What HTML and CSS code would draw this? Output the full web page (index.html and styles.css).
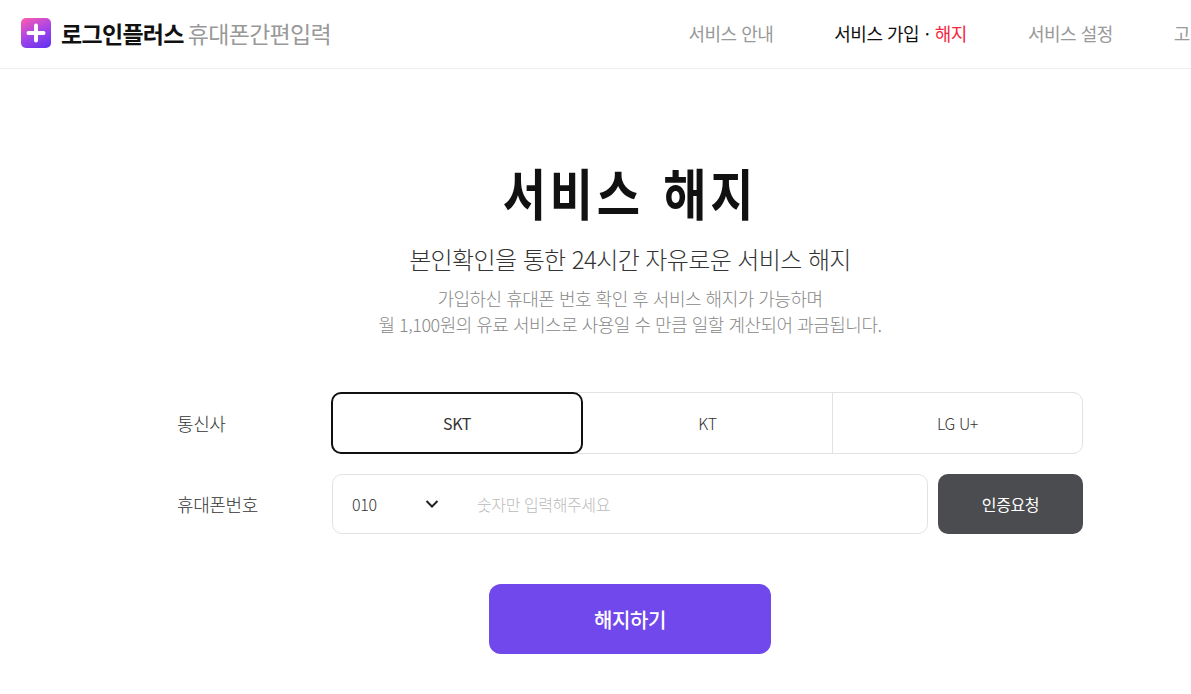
FILE: index.html
```html
<!DOCTYPE html>
<html lang="ko">

<head>
    <meta charset="UTF-8">
    <meta name="viewport" content="width=device-width, initial-scale=1.0">
    <title>서비스 해지</title>
    <link rel="stylesheet" href="styles.css">
</head>

<body>
    <div class="page">
        <header class="topbar">
            <a class="brand" href="#">
                <svg class="brand-icon" width="30" height="30" viewBox="0 0 30 30">
                    <defs>
                        <linearGradient id="brandFill" x1="0.2" y1="0" x2="0.7" y2="1">
                            <stop offset="0" stop-color="#f559b4" />
                            <stop offset="0.5" stop-color="#a945e6" />
                            <stop offset="1" stop-color="#6a35f0" />
                        </linearGradient>
                    </defs>
                    <rect width="30" height="30" rx="5" fill="url(#brandFill)" />
                    <path d="M15 7.5v15M7.5 15h15" stroke="#fff" stroke-width="4" stroke-linecap="round" />
                </svg>
                <span class="brand-name">로그인플러스</span>
                <span class="brand-sub">휴대폰간편입력</span>
            </a>
            <nav class="menu">
                <a href="#">서비스 안내</a>
                <a href="#" class="active">서비스 가입 <i class="dot">·</i> <em>해지</em></a>
                <a href="#">서비스 설정</a>
                <a href="#">고객센터</a>
            </nav>
        </header>

        <main class="content">
            <h1>서비스 해지</h1>
            <p class="lead">본인확인을 통한 24시간 자유로운 서비스 해지</p>
            <p class="note">가입하신 휴대폰 번호 확인 후 서비스 해지가 가능하며<br>월 1,100원의 유료 서비스로 사용일 수 만큼 일할 계산되어 과금됩니다.</p>

            <form class="form">
                <div class="row">
                    <label>통신사</label>
                    <div class="carriers">
                        <button type="button" class="carrier selected">SKT</button>
                        <button type="button" class="carrier">KT</button>
                        <button type="button" class="carrier">LG U+</button>
                    </div>
                </div>
                <div class="row">
                    <label for="phone">휴대폰번호</label>
                    <div class="phone-box">
                        <span class="prefix">010</span>
                        <svg class="chevron" width="14" height="8" viewBox="0 0 14 8">
                            <path d="M1.5 1l5.5 5.5L12.5 1" fill="none" stroke="#222" stroke-width="2" />
                        </svg>
                        <input type="text" id="phone" placeholder="숫자만 입력해주세요">
                    </div>
                    <button type="button" class="request">인증요청</button>
                </div>
                <button type="submit" class="submit">해지하기</button>
            </form>
        </main>
    </div>
</body>

</html>
```

FILE: styles.css
```css
* {
    box-sizing: border-box;
}

html,
body {
    height: 694px;
    overflow: hidden;
}

body {
    margin: 0;
    font-family: "Noto Sans CJK KR", "Noto Sans", sans-serif;
    background-color: #fff;
    color: #333;
}

a {
    text-decoration: none;
    color: inherit;
}

.page {
    width: 1260px;
}

.topbar {
    display: flex;
    align-items: center;
    justify-content: space-between;
    height: 69px;
    padding: 0 22px 2px 21px;
    border-bottom: 1px solid #eee;
    white-space: nowrap;
}

.brand {
    display: flex;
    align-items: center;
}

.brand-icon {
    margin-right: 10px;
}

.brand-name {
    font-size: 23px;
    font-weight: 700;
    color: #111;
    letter-spacing: -0.7px;
}

.brand-sub {
    margin-left: 4px;
    font-size: 23px;
    color: #999;
    letter-spacing: -0.7px;
}

.menu {
    display: flex;
    gap: 61px;
    font-size: 18px;
    color: #999;
    letter-spacing: -0.5px;
}

.menu .active {
    color: #111;
}

.menu .dot {
    font-style: normal;
    margin: 0 1px;
}

.menu em {
    font-style: normal;
    color: #f5273f;
}

.content {
    display: flex;
    flex-direction: column;
    align-items: center;
    padding-top: 85px;
}

h1 {
    margin: 0;
    font-size: 47px;
    line-height: 76px;
    font-weight: 700;
    color: #111;
    letter-spacing: 3.8px;
    word-spacing: 2.5px;
    transform: scaleY(1.17);
}

.lead {
    margin: 11px 0 0;
    font-size: 24px;
    line-height: 36px;
    font-weight: 300;
    color: #333;
    letter-spacing: -0.6px;
}

.note {
    margin: 8px 0 0;
    font-size: 18px;
    line-height: 26px;
    font-weight: 300;
    color: #888;
    text-align: center;
    letter-spacing: -0.5px;
}

.form {
    display: flex;
    flex-direction: column;
    align-items: center;
    width: 906px;
    margin-top: 55px;
}

.row {
    display: flex;
    align-items: center;
    width: 100%;
    margin-bottom: 20px;
}

.row label {
    width: 155px;
    font-size: 18px;
    font-weight: 300;
    letter-spacing: -0.4px;
    color: #333;
}

.carriers {
    display: flex;
    flex: 1;
    height: 62px;
    border: 1px solid #e2e2e2;
    border-radius: 10px;
}

.carrier {
    flex: 1;
    margin: -1px 0;
    padding: 0;
    font-family: inherit;
    font-size: 16px;
    font-weight: 300;
    color: #333;
    letter-spacing: -0.4px;
    background: none;
    border: none;
    border-left: 1px solid #e2e2e2;
}

.carrier.selected {
    flex: 0 0 252px;
    margin-left: -2px;
    font-weight: 400;
    border: 2px solid #111;
    border-radius: 10px;
}

.carrier.selected + .carrier {
    border-left: none;
}

.phone-box {
    display: flex;
    align-items: center;
    flex: 1;
    height: 60px;
    padding-left: 19px;
    border: 1px solid #e2e2e2;
    border-radius: 10px;
}

.prefix {
    width: 73px;
    font-size: 16px;
    font-weight: 300;
    letter-spacing: -0.3px;
}

.chevron {
    margin-right: 38px;
}

.phone-box input {
    flex: 1;
    min-width: 0;
    padding: 0;
    font-family: inherit;
    font-size: 16px;
    font-weight: 300;
    letter-spacing: -0.4px;
    border: none;
    outline: none;
}

.phone-box input::placeholder {
    color: #bbb;
}

.request {
    width: 145px;
    height: 60px;
    margin-left: 10px;
    font-family: inherit;
    font-size: 16px;
    font-weight: 400;
    color: #fff;
    letter-spacing: -0.4px;
    background-color: #4b4c50;
    border: none;
    border-radius: 10px;
}

.submit {
    width: 282px;
    height: 70px;
    margin-top: 30px;
    font-family: inherit;
    font-size: 20px;
    font-weight: 500;
    color: #fff;
    letter-spacing: -0.4px;
    background-color: #7048ec;
    border: none;
    border-radius: 12px;
}
```
